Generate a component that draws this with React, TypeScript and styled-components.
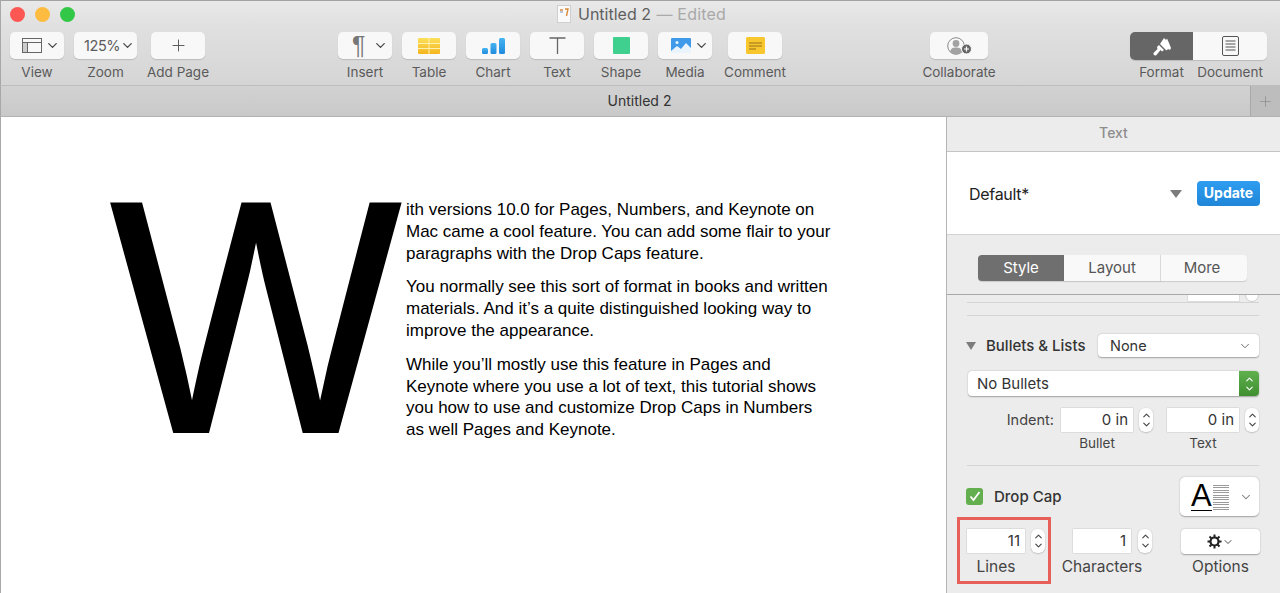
import React from 'react';
import styled, { createGlobalStyle } from 'styled-components';
import { ChevronDown, ChevronUp, Plus } from 'lucide-react';

const UI_FONT = `Inter, "Liberation Sans", sans-serif`;

const GlobalStyle = createGlobalStyle`
  html, body { margin: 0; padding: 0; background: #fff; }
  body { width: 1280px; height: 593px; overflow: hidden; font-family: ${UI_FONT}; }
  #root { width: 1280px; height: 593px; }
`;

const Window = styled.div`
  width: 1280px;
  height: 593px;
  display: flex;
  flex-direction: column;
  overflow: hidden;
  box-sizing: border-box;
`;

const Chrome = styled.div`
  height: 86px;
  flex: none;
  box-sizing: border-box;
  border-top: 1px solid #a3a3a3;
  border-left: 1px solid #a8a8a8;
  border-bottom: 1px solid #bdbdbd;
  background: linear-gradient(#e9e9e9, #e0e0e0 30%, #d5d5d5);
`;

const TitleBar = styled.div`
  height: 27px;
  display: flex;
  align-items: center;
  position: relative;
`;

const Lights = styled.div`
  display: flex;
  gap: 10px;
  padding-left: 9px;
`;

const Light = styled.span<{ $c: string }>`
  width: 15px;
  height: 15px;
  border-radius: 50%;
  background: ${p => p.$c};
`;

const Title = styled.div`
  position: absolute;
  left: 556px;
  top: 2px;
  display: flex;
  align-items: center;
  gap: 7px;
  font-size: 16px;
  line-height: 22px;
  color: #5f5f5f;
  white-space: nowrap;
`;

const Edited = styled.span`
  color: #a9a9a9;
  margin-left: 1px;
  letter-spacing: 0.2px;
`;

const Toolbar = styled.div`
  display: flex;
  padding: 4px 0 0 9px;
`;

const Group = styled.div<{ $ml?: number; $gap?: number }>`
  display: flex;
  gap: ${p => p.$gap ?? 10}px;
  margin-left: ${p => p.$ml ?? 0}px;
`;

const Tool = styled.div<{ $w: number; $ml?: number }>`
  width: ${p => p.$w}px;
  margin-left: ${p => p.$ml ?? 0}px;
  display: flex;
  flex-direction: column;
  align-items: center;
`;

const ToolButton = styled.div<{ $pl?: number; $gap?: number }>`
  width: 100%;
  height: 27px;
  box-sizing: border-box;
  display: flex;
  align-items: center;
  justify-content: ${p => (p.$pl !== undefined ? 'flex-start' : 'center')};
  padding-left: ${p => p.$pl ?? 0}px;
  gap: ${p => p.$gap ?? 3}px;
  border-radius: 5px;
  background: #f8f8f8;
  box-shadow: 0 1px 1px rgba(0, 0, 0, 0.14);
  color: #5c5c5c;
  font-size: 14.5px;
  letter-spacing: -0.4px;
`;

const ToolLabel = styled.div`
  margin-top: 4px;
  font-size: 13.5px;
  line-height: 18px;
  color: #5a5a5a;
  white-space: nowrap;
`;

const Pilcrow = styled.span`
  font-family: "Liberation Sans", sans-serif;
  font-size: 25px;
  color: #777;
  line-height: 1;
`;

const Segments = styled.div`
  display: flex;
  height: 28px;
  width: 137px;
  border-radius: 5px;
  overflow: hidden;
  box-shadow: 0 1px 1px rgba(0, 0, 0, 0.14);
`;

const Segment = styled.div<{ $w: number; $on?: boolean }>`
  width: ${p => p.$w}px;
  display: flex;
  align-items: center;
  justify-content: center;
  background: ${p => (p.$on ? '#666666' : '#f8f8f8')};
`;

const SegLabels = styled.div`
  display: flex;
  width: 137px;
`;

const SegLabel = styled(ToolLabel)<{ $w: number }>`
  width: ${p => p.$w}px;
  margin-top: 3px;
  text-align: center;
`;

const TabBar = styled.div`
  height: 31px;
  flex: none;
  box-sizing: border-box;
  display: flex;
  border-bottom: 1px solid #b2b2b2;
  border-left: 1px solid #a8a8a8;
  background: linear-gradient(#d2d2d2, #c9c9c9);
`;

const TabTitle = styled.div`
  flex: 1;
  text-align: center;
  font-size: 14px;
  line-height: 30px;
  color: #333;
  padding-left: 28px;
`;

const NewTab = styled.div`
  width: 29px;
  display: flex;
  align-items: center;
  justify-content: center;
  background: #bdbdbd;
  border-left: 1px solid #a9a9a9;
  color: #8a8a8a;
`;

const Main = styled.div`
  flex: 1;
  display: flex;
  min-height: 0;
`;

const Page = styled.div`
  flex: 1;
  background: #fff;
  display: flex;
  padding: 82px 0 0 109px;
  border-left: 1px solid #a8a8a8;
  box-sizing: border-box;
`;

const DropCapLetter = styled.div`
  width: 296px;
  height: 240px;
  flex: none;
  margin-top: -2px;
  font-family: "Liberation Sans", sans-serif;
  font-size: 332px;
  line-height: 240px;
  color: #000;
  -webkit-text-stroke: 2px #000;
  transform: scaleX(0.93);
  transform-origin: left center;
`;

const Copy = styled.div`
  font-family: "Liberation Sans", sans-serif;
  font-size: 17px;
  line-height: 21.8px;
  color: #000;
  white-space: nowrap;
`;

const Para = styled.p`
  margin: 0 0 12px;
`;

const Panel = styled.div`
  width: 334px;
  flex: none;
  box-sizing: border-box;
  border-left: 1px solid #b5b5b5;
  background: #ececec;
  display: flex;
  flex-direction: column;
  overflow: hidden;
`;

const PanelHead = styled.div`
  height: 35px;
  flex: none;
  text-align: center;
  font-size: 14px;
  line-height: 32px;
  color: #8d8d8d;
  font-weight: 500;
  border-bottom: 1px solid #c4c4c4;
  box-sizing: border-box;
`;

const StyleRow = styled.div`
  height: 83px;
  flex: none;
  box-sizing: border-box;
  background: #fff;
  border-bottom: 1px solid #d2d2d2;
  display: flex;
  align-items: center;
  padding: 2px 20px 0 22px;
  font-size: 16px;
  letter-spacing: -0.3px;
  color: #222;
`;

const StyleName = styled.div`
  flex: 1;
`;

const Tri = styled.span<{ $w: number; $h: number; $ml?: number }>`
  flex: none;
  width: 0;
  height: 0;
  margin-left: ${p => p.$ml ?? 0}px;
  border-left: ${p => p.$w / 2}px solid transparent;
  border-right: ${p => p.$w / 2}px solid transparent;
  border-top: ${p => p.$h}px solid #7c7c7c;
`;

const UpdateButton = styled.div`
  width: 63px;
  height: 25px;
  margin: -2px 0 0 15px;
  border-radius: 4px;
  background: linear-gradient(#2f9df0, #1f86d8);
  color: #fff;
  font-size: 14px;
  font-weight: 700;
  letter-spacing: 0;
  line-height: 24px;
  text-align: center;
`;

const TabsRow = styled.div`
  height: 60px;
  flex: none;
  box-sizing: border-box;
  display: flex;
  align-items: flex-start;
  padding: 20px 0 0 31px;
  border-bottom: 1px solid #a8a8a8;
`;

const TabSeg = styled.div<{ $w: number; $on?: boolean }>`
  width: ${p => p.$w}px;
  height: 26px;
  box-sizing: border-box;
  text-align: center;
  font-size: 15px;
  line-height: 26px;
  color: ${p => (p.$on ? '#fff' : '#555')};
  background: ${p => (p.$on ? '#6f6f6f' : '#f9f9f9')};
  box-shadow: 0 1px 1px rgba(0, 0, 0, 0.14);
  border-right: ${p => (p.$on ? 'none' : '1px solid #dcdcdc')};
  &:first-child { border-radius: 4px 0 0 4px; }
  &:last-child { border-radius: 0 4px 4px 0; border-right: none; padding-right: 4px; }
`;

const PanelBody = styled.div`
  flex: 1;
  padding: 0 21px 0 20px;
  display: flex;
  flex-direction: column;
`;

const ClippedRow = styled.div`
  height: 7px;
  overflow: hidden;
  display: flex;
  justify-content: flex-end;
  gap: 5px;
  align-items: flex-end;
  flex: none;
`;

const ClippedField = styled.div`
  width: 53px;
  height: 12px;
  background: #fff;
  border: 1px solid #ddd;
  box-sizing: border-box;
`;

const ClippedCircle = styled.div`
  width: 14px;
  height: 14px;
  border-radius: 50%;
  background: #fff;
  border: 1px solid #ccc;
  box-sizing: border-box;
`;

const Rule = styled.div<{ $mt: number }>`
  height: 1px;
  flex: none;
  background: #d4d4d4;
  margin-top: ${p => p.$mt}px;
`;

const BulletsRow = styled.div`
  display: flex;
  align-items: center;
  height: 23px;
  margin-top: 18px;
  flex: none;
`;

const SectionLabel = styled.div`
  margin-left: 10px;
  font-size: 15px;
  font-weight: 500;
  color: #333;
  white-space: nowrap;
  width: 113px;
`;

const Select = styled.div<{ $w: number; $h?: number }>`
  width: ${p => p.$w}px;
  height: ${p => p.$h ?? 23}px;
  flex: none;
  box-sizing: border-box;
  display: flex;
  align-items: center;
  justify-content: space-between;
  padding: 0 7px 0 12px;
  border-radius: 4px;
  background: #fff;
  box-shadow: 0 0.5px 1.5px rgba(0, 0, 0, 0.32);
  font-size: 14.5px;
  color: #333;
`;

const ListSelect = styled.div`
  height: 25px;
  margin-top: 14px;
  flex: none;
  display: flex;
  border-radius: 4px;
  overflow: hidden;
  background: #fff;
  box-shadow: 0 0.5px 1.5px rgba(0, 0, 0, 0.32);
  font-size: 15px;
  color: #333;
  width: 291px;
  margin-left: 1px;
`;

const ListValue = styled.div`
  flex: 1;
  padding-left: 9px;
  line-height: 25px;
`;

const GreenStepper = styled.div`
  width: 20px;
  background: linear-gradient(#5fb04d, #3f8f31);
  color: #fff;
  display: flex;
  flex-direction: column;
  align-items: center;
  justify-content: center;
`;

const IndentRow = styled.div`
  display: flex;
  margin-top: 12px;
  flex: none;
`;

const IndentLabel = styled.div`
  width: 95px;
  padding-right: 7px;
  box-sizing: border-box;
  text-align: right;
  font-size: 14.5px;
  line-height: 24px;
  color: #444;
`;

const Field = styled.div<{ $ml?: number }>`
  display: flex;
  flex-direction: column;
  align-items: stretch;
  margin-left: ${p => p.$ml ?? 0}px;
`;

const FieldTop = styled.div<{ $gap: number }>`
  display: flex;
  gap: ${p => p.$gap}px;
`;

const Input = styled.div<{ $w: number }>`
  width: ${p => p.$w}px;
  height: 24px;
  box-sizing: border-box;
  background: #fff;
  box-shadow: 0 0 1px rgba(0, 0, 0, 0.4);
  text-align: right;
  padding-right: 5px;
  font-size: 15px;
  line-height: 24px;
  color: #333;
`;

const Stepper = styled.div`
  width: 14px;
  height: 24px;
  border-radius: 6px;
  background: #fff;
  box-shadow: 0 0.5px 1.5px rgba(0, 0, 0, 0.3);
  display: flex;
  flex-direction: column;
  align-items: center;
  justify-content: center;
  color: #444;
`;

const FieldLabel = styled.div<{ $w: number; $size?: number; $mt?: number }>`
  width: ${p => p.$w}px;
  margin-top: ${p => p.$mt ?? 2}px;
  text-align: center;
  white-space: nowrap;
  display: flex;
  justify-content: center;
  font-size: ${p => p.$size ?? 13.5}px;
  line-height: 18px;
  color: #444;
`;

const DropCapRow = styled.div`
  display: flex;
  align-items: center;
  margin-top: 11px;
  height: 39px;
  flex: none;
`;

const Check = styled.div`
  width: 17px;
  height: 17px;
  border-radius: 3px;
  background: #63ae4e;
  display: flex;
  align-items: center;
  justify-content: center;
  margin-left: -1px;
  flex: none;
`;

const DropCapLabel = styled.div`
  margin-left: 11px;
  width: 187px;
  font-size: 15px;
  font-weight: 500;
  color: #333;
`;

const StyleWell = styled.div`
  width: 79px;
  height: 39px;
  flex: none;
  border-radius: 5px;
  background: #fff;
  box-shadow: 0 0.5px 1.5px rgba(0, 0, 0, 0.32);
  display: flex;
  align-items: center;
  padding-left: 11px;
  box-sizing: border-box;
  color: #777;
  gap: 10px;
`;

const WellA = styled.div`
  display: flex;
  align-items: flex-end;
  height: 29px;
  gap: 1px;
`;

const BigA = styled.span`
  font-family: "Liberation Sans", sans-serif;
  font-size: 31px;
  line-height: 29px;
  color: #000;
  border-bottom: 1px solid #000;
`;

const TextBars = styled.div`
  width: 16px;
  height: 26px;
  background: repeating-linear-gradient(#9a9a9a 0 1px, #fff 1px 2.4px);
`;

const ControlsRow = styled.div`
  display: flex;
  align-items: flex-start;
  margin: 1px 0 0 -10px;
  flex: none;
`;

const Highlight = styled.div`
  width: 94px;
  height: 67px;
  box-sizing: border-box;
  border: 3px solid #e8605a;
  padding: 9px 0 0 7px;
  flex: none;
`;

const CharsField = styled(Field)`
  margin: 12px 0 0 22px;
`;

const OptionsField = styled(Field)`
  margin: 12px 0 0 29px;
`;

const OptionsButton = styled.div`
  width: 79px;
  height: 25px;
  border-radius: 4px;
  background: #fff;
  box-shadow: 0 0.5px 1.5px rgba(0, 0, 0, 0.32);
  display: flex;
  align-items: center;
  justify-content: center;
  color: #333;
`;

const Chev = () => <ChevronDown size={15} strokeWidth={2.2} color="#4d4d4d" />;

const SpinUp = styled(ChevronUp)`
  margin-bottom: -1px;
`;

const SpinDown = styled(ChevronDown)`
  margin-top: -1px;
`;

const Spin = ({ color = '#444' }: { color?: string }) => (
  <>
    <SpinUp size={11} strokeWidth={2.4} color={color} />
    <SpinDown size={11} strokeWidth={2.4} color={color} />
  </>
);

const FileIcon = () => (
  <svg width="14" height="18" viewBox="0 0 14 18">
    <rect x="0.5" y="0.5" width="13" height="17" fill="#fafafa" stroke="#cfcfcf" />
    <path d="M3 5h3M8 4h3l-1.5 7" stroke="#d98b3a" strokeWidth="1.4" fill="none" />
    <path d="M3 7h3" stroke="#8aa7c9" strokeWidth="1.2" />
  </svg>
);

const ViewIcon = () => (
  <svg width="20" height="15" viewBox="0 0 20 15" fill="none" stroke="#666" strokeWidth="1">
    <rect x="1" y="5" width="5" height="9" fill="#ccc" stroke="none" />
    <rect x="0.5" y="0.5" width="19" height="14" />
    <path d="M0.5 4.5h19M5.5 4.5v10" />
  </svg>
);

const TableIcon = () => (
  <svg width="22" height="16" viewBox="0 0 22 16">
    <defs>
      <linearGradient id="tb" x1="0" y1="0" x2="0" y2="1">
        <stop offset="0" stopColor="#fbe05a" />
        <stop offset="1" stopColor="#f5b51e" />
      </linearGradient>
    </defs>
    <rect width="22" height="16" rx="1" fill="url(#tb)" />
    <path d="M0 5.500h22M0 10.500h22M11 0v16" stroke="#fff1b0" strokeWidth="1" />
  </svg>
);

const ChartIcon = () => (
  <svg width="23" height="16" viewBox="0 0 23 16">
    <defs>
      <linearGradient id="cb" x1="0" y1="0" x2="0" y2="1">
        <stop offset="0" stopColor="#45b4f0" />
        <stop offset="1" stopColor="#1f8ade" />
      </linearGradient>
    </defs>
    <rect x="0" y="10" width="6" height="6" rx="1.5" fill="url(#cb)" />
    <rect x="8.500" y="5" width="6" height="11" rx="1.5" fill="url(#cb)" />
    <rect x="17" y="0" width="6" height="16" rx="1.5" fill="url(#cb)" />
  </svg>
);

const TextIcon = () => (
  <svg width="17" height="17" viewBox="0 0 17 17" fill="none" stroke="#666" strokeWidth="1.3">
    <path d="M0.5 1h16M8.5 1v16" />
  </svg>
);

const ShapeIcon = () => (
  <svg width="17" height="17" viewBox="0 0 17 17">
    <rect width="17" height="17" rx="1" fill="#3fcf8e" />
  </svg>
);

const MediaIcon = () => (
  <svg width="20" height="15" viewBox="0 0 20 15">
    <rect width="20" height="15" rx="1" fill="#3f9bea" />
    <path d="M0 13l6-5 4 3 5-6 5 5v5H0z" fill="#eaf4fd" />
    <circle cx="6" cy="4.5" r="1.5" fill="#eaf4fd" />
  </svg>
);

const CommentIcon = () => (
  <svg width="19" height="17" viewBox="0 0 19 17">
    <rect width="19" height="17" rx="1.5" fill="#f8c72d" />
    <path d="M3 6h13M3 9h13M3 12h7" stroke="#96701a" strokeWidth="1" />
  </svg>
);

const CollabIcon = () => (
  <svg width="25" height="18" viewBox="0 0 25 18">
    <circle cx="9" cy="9" r="8.300" fill="none" stroke="#8a8a8a" strokeWidth="1" />
    <circle cx="9" cy="6.500" r="3.400" fill="#a2a2a2" />
    <path d="M3 15c1-4 3-4.500 6-4.500s5 .5 6 4.500l-3 2H6z" fill="#a2a2a2" />
    <circle cx="19.500" cy="12" r="5" fill="#666" stroke="#f8f8f8" />
    <path d="M17 12h5M19.500 9.500v5" stroke="#fff" strokeWidth="1.200" />
  </svg>
);

const BrushIcon = () => (
  <svg width="20" height="19" viewBox="0 0 20 19" fill="#fff">
    <path d="M8 7L12 1l2 2 1-1.500L17 6l2 5-1 2-2-1-1.500 1.500z" />
    <path d="M7 8l5 5-2 1.500L8.500 13l-4 5C3 19.500 1 18 1.500 16l4-4L5 10z" />
  </svg>
);

const DocIcon = () => (
  <svg width="17" height="20" viewBox="0 0 17 20" fill="none" stroke="#555" strokeWidth="1">
    <rect x="0.500" y="0.500" width="16" height="19" rx="1.500" />
    <path d="M3.500 5h10M3.500 8h10M3.500 11h10M3.500 14h10" />
  </svg>
);

const GearIcon = () => (
  <svg width="15" height="15" viewBox="0 0 15 15">
    <circle cx="7.500" cy="7.500" r="4" fill="none" stroke="#222" strokeWidth="2.200" />
    <path d="M7.500 0.500v2.500M7.500 12v2.500M0.500 7.500H3M12 7.500h2.500M2.500 2.500l1.800 1.800M10.700 10.700l1.800 1.800M12.500 2.500l-1.800 1.800M4.300 10.700l-1.800 1.800" stroke="#222" strokeWidth="2" />
  </svg>
);

const CheckMark = () => (
  <svg width="12" height="11" viewBox="0 0 12 11" fill="none" stroke="#fff" strokeWidth="1.800">
    <path d="M1.500 5.500l3 3.500 6-8" />
  </svg>
);

const App: React.FC = () => (
  <Window>
    <GlobalStyle />
    <Chrome>
      <TitleBar>
        <Lights>
          <Light $c="#fc5753" />
          <Light $c="#fdbc40" />
          <Light $c="#33c748" />
        </Lights>
        <Title>
          <FileIcon />
          <span>Untitled 2 <Edited>— Edited</Edited></span>
        </Title>
      </TitleBar>
      <Toolbar>
        <Group>
          <Tool $w={54}>
            <ToolButton $pl={12}><ViewIcon /><Chev /></ToolButton>
            <ToolLabel>View</ToolLabel>
          </Tool>
          <Tool $w={63}>
            <ToolButton $pl={10} $gap={0}>125%<Chev /></ToolButton>
            <ToolLabel>Zoom</ToolLabel>
          </Tool>
        </Group>
        <Group $ml={14}>
          <Tool $w={54}>
            <ToolButton><Plus size={19} strokeWidth={1.2} color="#555" /></ToolButton>
            <ToolLabel>Add Page</ToolLabel>
          </Tool>
        </Group>
        <Group $ml={133}>
          <Tool $w={54}>
            <ToolButton $pl={14} $gap={8}><Pilcrow>¶</Pilcrow><Chev /></ToolButton>
            <ToolLabel>Insert</ToolLabel>
          </Tool>
          <Tool $w={54}>
            <ToolButton><TableIcon /></ToolButton>
            <ToolLabel>Table</ToolLabel>
          </Tool>
          <Tool $w={54}>
            <ToolButton><ChartIcon /></ToolButton>
            <ToolLabel>Chart</ToolLabel>
          </Tool>
          <Tool $w={54}>
            <ToolButton><TextIcon /></ToolButton>
            <ToolLabel>Text</ToolLabel>
          </Tool>
          <Tool $w={54}>
            <ToolButton><ShapeIcon /></ToolButton>
            <ToolLabel>Shape</ToolLabel>
          </Tool>
          <Tool $w={54}>
            <ToolButton $pl={13}><MediaIcon /><Chev /></ToolButton>
            <ToolLabel>Media</ToolLabel>
          </Tool>
          <Tool $w={54} $ml={6}>
            <ToolButton><CommentIcon /></ToolButton>
            <ToolLabel>Comment</ToolLabel>
          </Tool>
        </Group>
        <Group $ml={148}>
          <Tool $w={58}>
            <ToolButton><CollabIcon /></ToolButton>
            <ToolLabel>Collaborate</ToolLabel>
          </Tool>
        </Group>
        <Group $ml={142} $gap={0}>
          <Field>
            <Segments>
              <Segment $w={63} $on><BrushIcon /></Segment>
              <Segment $w={74}><DocIcon /></Segment>
            </Segments>
            <SegLabels>
              <SegLabel $w={63}>Format</SegLabel>
              <SegLabel $w={74}>Document</SegLabel>
            </SegLabels>
          </Field>
        </Group>
      </Toolbar>
    </Chrome>
    <TabBar>
      <TabTitle>Untitled 2</TabTitle>
      <NewTab><Plus size={17} strokeWidth={1} /></NewTab>
    </TabBar>
    <Main>
      <Page>
        <DropCapLetter>W</DropCapLetter>
        <Copy>
          <Para>
            ith versions 10.0 for Pages, Numbers, and Keynote on<br />
            Mac came a cool feature. You can add some flair to your<br />
            paragraphs with the Drop Caps feature.
          </Para>
          <Para>
            You normally see this sort of format in books and written<br />
            materials. And it’s a quite distinguished looking way to<br />
            improve the appearance.
          </Para>
          <Para>
            While you’ll mostly use this feature in Pages and<br />
            Keynote where you use a lot of text, this tutorial shows<br />
            you how to use and customize Drop Caps in Numbers<br />
            as well Pages and Keynote.
          </Para>
        </Copy>
      </Page>
      <Panel>
        <PanelHead>Text</PanelHead>
        <StyleRow>
          <StyleName>Default*</StyleName>
          <Tri $w={13} $h={8} />
          <UpdateButton>Update</UpdateButton>
        </StyleRow>
        <TabsRow>
          <TabSeg $w={86} $on>Style</TabSeg>
          <TabSeg $w={97}>Layout</TabSeg>
          <TabSeg $w={86}>More</TabSeg>
        </TabsRow>
        <PanelBody>
          <ClippedRow>
            <ClippedField />
            <ClippedCircle />
          </ClippedRow>
          <Rule $mt={0} />
          <Rule $mt={12} />
          <BulletsRow>
            <Tri $w={10} $h={8} $ml={-1} />
            <SectionLabel>Bullets &amp; Lists</SectionLabel>
            <Select $w={161}>None<ChevronDown size={14} strokeWidth={1.6} color="#666" /></Select>
          </BulletsRow>
          <ListSelect>
            <ListValue>No Bullets</ListValue>
            <GreenStepper><Spin color="#fff" /></GreenStepper>
          </ListSelect>
          <IndentRow>
            <IndentLabel>Indent:</IndentLabel>
            <Field>
              <FieldTop $gap={6}>
                <Input $w={72}>0 in</Input>
                <Stepper><Spin /></Stepper>
              </FieldTop>
              <FieldLabel $w={72}>Bullet</FieldLabel>
            </Field>
            <Field $ml={14}>
              <FieldTop $gap={6}>
                <Input $w={72}>0 in</Input>
                <Stepper><Spin /></Stepper>
              </FieldTop>
              <FieldLabel $w={72}>Text</FieldLabel>
            </Field>
          </IndentRow>
          <Rule $mt={13} />
          <DropCapRow>
            <Check><CheckMark /></Check>
            <DropCapLabel>Drop Cap</DropCapLabel>
            <StyleWell>
              <WellA><BigA>A</BigA><TextBars /></WellA>
              <ChevronDown size={14} strokeWidth={1.8} />
            </StyleWell>
          </DropCapRow>
          <ControlsRow>
            <Highlight>
              <Field>
                <FieldTop $gap={6}>
                  <Input $w={58}>11</Input>
                  <Stepper><Spin /></Stepper>
                </FieldTop>
                <FieldLabel $w={58} $size={15.5} $mt={5}>Lines</FieldLabel>
              </Field>
            </Highlight>
            <CharsField>
              <FieldTop $gap={7}>
                <Input $w={58}>1</Input>
                <Stepper><Spin /></Stepper>
              </FieldTop>
              <FieldLabel $w={58} $size={15.5} $mt={5}>Characters</FieldLabel>
            </CharsField>
            <OptionsField>
              <OptionsButton><GearIcon /><ChevronDown size={12} strokeWidth={1.8} /></OptionsButton>
              <FieldLabel $w={79} $size={15.5} $mt={4}>Options</FieldLabel>
            </OptionsField>
          </ControlsRow>
        </PanelBody>
      </Panel>
    </Main>
  </Window>
);

export default App;
